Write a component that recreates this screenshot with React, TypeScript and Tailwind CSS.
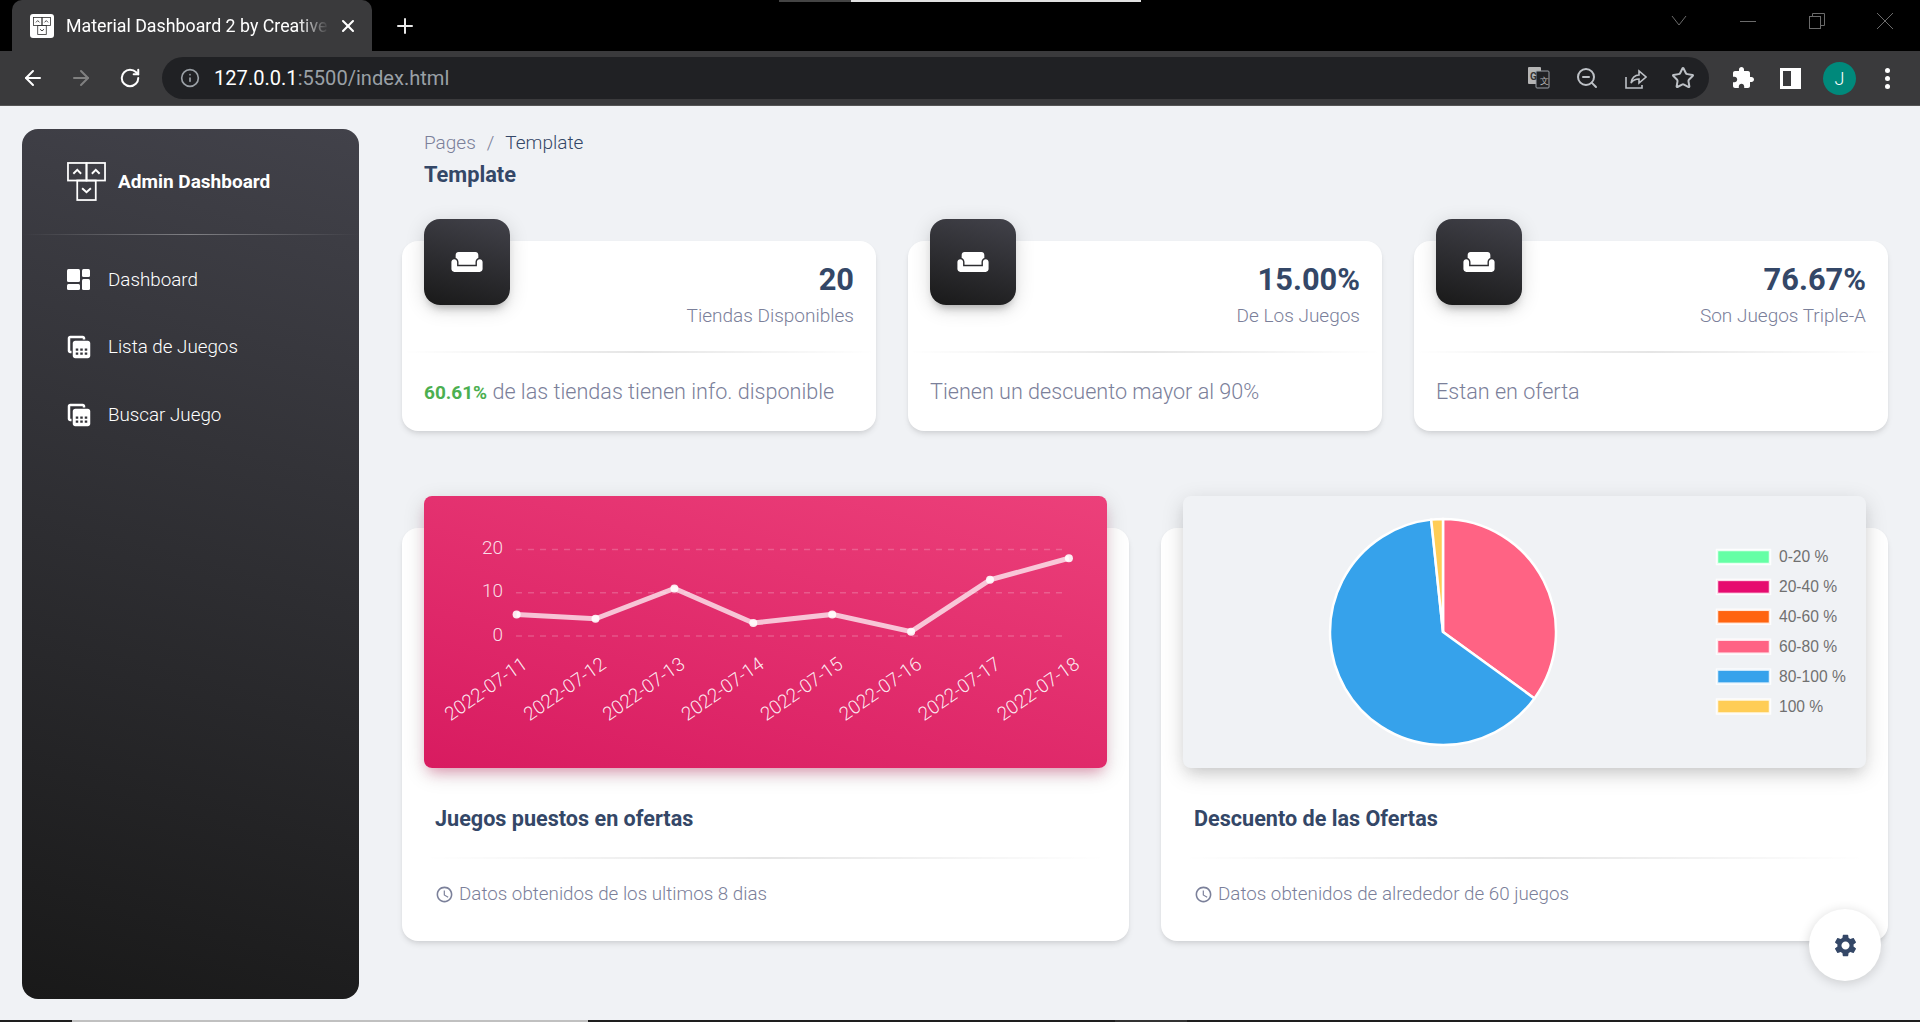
import { ArrowLeft, ArrowRight, Info, Plus, RotateCw, Star, X, ZoomOut } from 'lucide-react'

const cards = [
  { value: '20', label: 'Tiendas Disponibles', strong: '60.61%', text: ' de las tiendas tienen info. disponible' },
  { value: '15.00%', label: 'De Los Juegos', strong: '', text: 'Tienen un descuento mayor al 90%' },
  { value: '76.67%', label: 'Son Juegos Triple-A', strong: '', text: 'Estan en oferta' },
]

const linePoints = [5, 4, 11, 3, 5, 1, 13, 18]
const lineDates = ['2022-07-11', '2022-07-12', '2022-07-13', '2022-07-14', '2022-07-15', '2022-07-16', '2022-07-17', '2022-07-18']

const legend = [
  { label: '0-20 %', color: '#65ffa5' },
  { label: '20-40 %', color: '#e60b6f' },
  { label: '40-60 %', color: '#ff6410' },
  { label: '60-80 %', color: '#ff6384' },
  { label: '80-100 %', color: '#36a2eb' },
  { label: '100 %', color: '#ffcd56' },
]

const slices = [
  { from: 0, to: 126, color: '#ff6384' },
  { from: 126, to: 354, color: '#36a2eb' },
  { from: 354, to: 360, color: '#ffcd56' },
]

function LogoMark({ size, stroke }: { size: number; stroke: string }) {
  return (
    <svg width={size} height={size} viewBox="0 0 40 40" fill="none" stroke={stroke} strokeWidth="1.8">
      <rect x="1" y="1" width="19" height="18" />
      <rect x="20" y="1" width="19" height="18" />
      <rect x="10.5" y="19" width="19" height="20" />
      <path d="M6.5 12l4-4 4 4M25.5 12l4-4 4 4M15.5 27l4.5 4 4.5-4" strokeWidth="2" />
    </svg>
  )
}

function Favicon() {
  return (
    <div className="w-6 h-6 bg-white rounded-[3px] flex items-center justify-center">
      <LogoMark size={18} stroke="#333333" />
    </div>
  )
}

function DashboardIcon() {
  return (
    <svg width="23" height="21" viewBox="0 0 23 21" fill="white">
      <rect x="0" y="0" width="13" height="13" rx="1.5" />
      <rect x="0" y="15" width="13" height="6" rx="1.5" />
      <rect x="15" y="0" width="8" height="8" rx="1.5" />
      <rect x="15" y="10" width="8" height="11" rx="1.5" />
    </svg>
  )
}

function TableIcon() {
  return (
    <svg width="30" height="30" viewBox="0 0 24 24" fill="white" className="-m-[3.5px]">
      <path
        fillRule="evenodd"
        d="M19 7H9c-1.1 0-2 .9-2 2v10c0 1.1.9 2 2 2h10c1.1 0 2-.9 2-2V9c0-1.1-.9-2-2-2zM13 13.2h2V15h-2zM13 16.4h2v1.8h-2zM9.4 13.2h2V15h-2zM16.6 13.2h2V15h-2zM9.4 16.4h2v1.8h-2zM16.6 16.4h2v1.8h-2z"
      />
      <path d="M6 17H5c-1.1 0-2-.9-2-2V5c0-1.1.9-2 2-2h10c1.1 0 2 .9 2 2v1h-2V5H5v10h1v2z" />
    </svg>
  )
}

function SofaIcon() {
  return (
    <svg width="34" height="34" viewBox="0 0 24 24" fill="white">
      <path d="M21 10c-1.1 0-2 .9-2 2v3H5v-3c0-1.1-.9-2-2-2s-2 .9-2 2v5c0 1.1.9 2 2 2h18c1.1 0 2-.9 2-2v-5c0-1.1-.9-2-2-2zm-3-5H6c-1.1 0-2 .9-2 2v2.15c1.16.41 2 1.51 2 2.82V14h12v-2.03c0-1.3.84-2.4 2-2.82V7c0-1.1-.9-2-2-2z" />
    </svg>
  )
}

function ClockIcon() {
  return (
    <svg width="19" height="19" viewBox="0 0 24 24" fill="#7b809a">
      <path d="M11.99 2C6.47 2 2 6.48 2 12s4.47 10 9.99 10C17.52 22 22 17.52 22 12S17.52 2 11.99 2zM12 20c-4.42 0-8-3.58-8-8s3.58-8 8-8 8 3.58 8 8-3.58 8-8 8zm.5-13H11v6l5.25 3.15.75-1.23-4.5-2.67V7z" />
    </svg>
  )
}

function Divider() {
  return <div className="h-[2px] bg-[linear-gradient(90deg,rgba(0,0,0,0),rgba(0,0,0,0.1),rgba(0,0,0,0))]" />
}

function BrowserChrome() {
  return (
    <div className="shrink-0 font-[family-name:Roboto,sans-serif]">
      {/* Tab strip */}
      <div className="h-[51px] bg-black flex items-end relative">
        <div className="absolute top-0 left-[779px] h-[2px] w-[72px] bg-[#444444]" />
        <div className="absolute top-0 left-[851px] h-[2px] w-[290px] bg-[#e0e0e0]" />
        <div className="ml-3 w-[360px] h-[51px] bg-[#3a3a3c] rounded-t-[10px] flex items-center pl-[18px]">
          <Favicon />
          <span className="ml-[12px] mt-[2px] w-[263px] overflow-hidden whitespace-nowrap text-[17.8px] text-white [mask-image:linear-gradient(90deg,black_88%,transparent)]">
            Material Dashboard 2 by Creative
          </span>
          <X size={20} strokeWidth={2.5} color="white" className="ml-[9px]" />
        </div>
        <Plus size={24} strokeWidth={2} color="#e8e8e8" className="ml-[21px] mb-[13px]" />
        <div className="flex-1" />
        <div className="flex items-center h-[51px] pb-[9px] text-[#6b6b6b]">
          <svg width="16" height="10" viewBox="0 0 16 10" fill="none" stroke="currentColor" className="mr-[53px]">
            <path d="M1 0l7 9 7-9" />
          </svg>
          <div className="w-4 h-px bg-current mr-[53px]" />
          <svg width="16" height="16" viewBox="0 0 16 16" fill="none" stroke="currentColor" className="mr-[52px]">
            <rect x="0.5" y="3.5" width="11" height="12" />
            <path d="M3.5 3.5v-3h12v12h-4" />
          </svg>
          <svg width="16" height="16" viewBox="0 0 16 16" fill="none" stroke="currentColor" className="mr-[27px]">
            <path d="M0 0l16 16M16 0L0 16" />
          </svg>
        </div>
      </div>
      {/* Toolbar */}
      <div className="h-[55px] bg-[#3a3a3c] border-b border-[#555555] flex items-center">
        <ArrowLeft size={24} color="white" className="ml-[21px]" />
        <ArrowRight size={24} color="#808080" className="ml-[24px]" />
        <RotateCw size={22} color="white" className="ml-[26px]" strokeWidth={2.2} />
        <div className="ml-[21px] w-[1547px] h-[42px] rounded-full bg-[#202124] flex items-center pl-[18px]">
          <Info size={20} color="#9aa0a6" />
          <span className="ml-[14px] text-[20.1px] text-white">
            127.0.0.1<span className="text-[#9aa0a6]">:5500/index.html</span>
          </span>
          <div className="flex-1" />
          <svg width="22" height="24" viewBox="0 0 22 24" className="mr-[25px]">
            <rect x="0" y="1" width="13" height="17" rx="1" fill="#b5b5b5" />
            <rect x="8" y="5" width="13" height="17" rx="1" fill="#202124" stroke="#9aa0a6" />
            <text x="2" y="14" fontSize="10" fontWeight="700" fill="#333333" fontFamily="Roboto, sans-serif">G</text>
            <text x="12" y="18" fontSize="9" fill="#b5b5b5" fontFamily="Roboto, sans-serif">文</text>
          </svg>
          <ZoomOut size={24} color="#bdc1c6" className="mr-[24px]" />
          <svg width="24" height="24" viewBox="0 0 24 24" fill="none" stroke="#bdc1c6" strokeWidth="1.6" className="mr-[24px]">
            <path d="M3 11v11h16v-3M8 17c.5-5 4-8 8-8V5l7 6-7 6v-4c-3 0-6 1-8 4z" />
          </svg>
          <Star size={24} color="#bdc1c6" strokeWidth={2} className="mr-[14px]" />
        </div>
        <svg width="24" height="24" viewBox="0 0 24 24" fill="white" className="ml-[22px]">
          <path d="M20.5 11H19V7c0-1.1-.9-2-2-2h-4V3.5C13 2.12 11.88 1 10.5 1S8 2.12 8 3.5V5H4c-1.1 0-1.99.9-1.99 2v3.8H3.5c1.49 0 2.7 1.21 2.7 2.7s-1.21 2.7-2.7 2.7H2V20c0 1.1.9 2 2 2h3.8v-1.5c0-1.49 1.21-2.7 2.7-2.7 1.49 0 2.7 1.21 2.7 2.7V22H17c1.1 0 2-.9 2-2v-4h1.5c1.38 0 2.5-1.12 2.5-2.5S21.88 11 20.5 11z" />
        </svg>
        <div className="ml-[25px] w-[21px] h-[21px] border-[3px] border-white flex justify-end">
          <div className="w-[7px] h-full bg-white" />
        </div>
        <div className="ml-[22px] w-[33px] h-[33px] rounded-full bg-[#00897b] flex items-center justify-center text-white text-[18px] font-light">
          J
        </div>
        <div className="ml-[29px] flex flex-col gap-[3px]">
          <div className="w-[5px] h-[5px] rounded-full bg-white" />
          <div className="w-[5px] h-[5px] rounded-full bg-white" />
          <div className="w-[5px] h-[5px] rounded-full bg-white" />
        </div>
      </div>
    </div>
  )
}

function Sidebar() {
  const items = [
    { label: 'Dashboard', icon: <DashboardIcon /> },
    { label: 'Lista de Juegos', icon: <TableIcon /> },
    { label: 'Buscar Juego', icon: <TableIcon /> },
  ]
  return (
    <aside className="ml-[22px] mt-[23px] w-[337px] h-[870px] shrink-0 rounded-2xl bg-[linear-gradient(195deg,#42424a,#191919)] flex flex-col">
      <div className="h-[105px] pl-[45px] pt-[33px] flex items-start gap-[12px] shrink-0">
        <LogoMark size={39} stroke="white" />
        <span className="mt-[9px] text-[19px] leading-[22px] font-bold text-white">Admin Dashboard</span>
      </div>
      <div className="h-px bg-[linear-gradient(90deg,rgba(255,255,255,0),rgba(255,255,255,0.35),rgba(255,255,255,0))]" />
      <nav className="mt-[11px] pl-[45px]">
        {items.map((item) => (
          <div key={item.label} className="h-[67.5px] flex items-center">
            <div className="w-[23px] h-[23px] flex items-center justify-center shrink-0">{item.icon}</div>
            <span className="ml-[18px] text-[18.8px] font-light text-white">{item.label}</span>
          </div>
        ))}
      </nav>
    </aside>
  )
}

function StatCard({ value, label, strong, text }: (typeof cards)[number]) {
  return (
    <div className="bg-white rounded-2xl h-[190px] shadow-[0_4px_6px_-1px_rgba(0,0,0,0.1),0_2px_4px_-1px_rgba(0,0,0,0.06)] flex flex-col">
      <div className="h-[110px] px-[22px] flex justify-between items-start">
        <div className="-mt-[22px] w-[86px] h-[86px] rounded-2xl bg-[linear-gradient(195deg,#42424a,#191919)] shadow-[0_4px_20px_rgba(0,0,0,0.14),0_7px_10px_-5px_rgba(64,64,64,0.4)] flex items-center justify-center">
          <SofaIcon />
        </div>
        <div className="pt-[19px] text-right">
          <div className="text-[30.8px] leading-[40px] font-bold text-[#344767]">{value}</div>
          <div className="mt-[3px] text-[19px] leading-[25px] font-light text-[#7b809a]">{label}</div>
        </div>
      </div>
      <Divider />
      <div className="mt-[23px] px-[22px] text-[21.6px] leading-[32px] font-light text-[#7b809a]">
        {strong && <span className="font-bold text-[#4caf50] text-[19px]">{strong}</span>}
        {text}
      </div>
    </div>
  )
}

function LineChart() {
  const x = (i: number) => 92.6 + i * 78.9
  const y = (v: number) => 140 - v * 4.32
  const path = linePoints.map((v, i) => `${x(i)},${y(v)}`).join(' ')
  return (
    <svg width="683" height="272" viewBox="0 0 683 272">
      {[0, 10, 20].map((v) => (
        <g key={v}>
          <line x1="92" x2="641" y1={y(v)} y2={y(v)} stroke="white" strokeOpacity="0.2" strokeWidth="1.5" strokeDasharray="6 6" />
          <text x="79" y={y(v) + 4.5} textAnchor="end" fontSize="19" fontWeight="300" fill="white" fillOpacity="0.85">
            {v}
          </text>
        </g>
      ))}
      <polyline points={path} fill="none" stroke="white" strokeOpacity="0.72" strokeWidth="5" />
      {linePoints.map((v, i) => (
        <circle key={i} cx={x(i)} cy={y(v)} r="4" fill="white" fillOpacity="0.9" />
      ))}
      {lineDates.map((d, i) => (
        <text
          key={d}
          transform={`translate(${x(i) + 12} 171) rotate(-35)`}
          textAnchor="end"
          fontSize="19"
          fontWeight="300"
          fill="white"
          fillOpacity="0.9"
        >
          {d}
        </text>
      ))}
    </svg>
  )
}

function PieChart() {
  const cx = 260
  const cy = 136
  const r = 113
  const polar = (deg: number) => {
    const a = ((deg - 90) * Math.PI) / 180
    return `${cx + r * Math.cos(a)} ${cy + r * Math.sin(a)}`
  }
  return (
    <svg width="683" height="272" viewBox="0 0 683 272">
      {slices.map((s) => (
        <path
          key={s.color}
          d={`M${cx} ${cy}L${polar(s.from)}A${r} ${r} 0 ${s.to - s.from > 180 ? 1 : 0} 1 ${polar(s.to)}Z`}
          fill={s.color}
          stroke="white"
          strokeWidth="2.5"
        />
      ))}
      {legend.map((l, i) => (
        <g key={l.label}>
          <rect x="534" y={54 + i * 29.9} width="53" height="14" fill={l.color} stroke="white" strokeWidth="2.5" strokeOpacity="0.85" />
          <text x="596" y={66 + i * 29.9} fontSize="15.6" fill="#707070" fontFamily="'Liberation Sans', Arial, sans-serif">
            {l.label}
          </text>
        </g>
      ))}
    </svg>
  )
}

function ChartCard({ title, note, header, children }: { title: string; note: string; header: string; children: React.ReactNode }) {
  return (
    <div className="bg-white rounded-2xl h-[413px] shadow-[0_4px_6px_-1px_rgba(0,0,0,0.1),0_2px_4px_-1px_rgba(0,0,0,0.06)] flex flex-col">
      <div className={`-mt-[32px] mx-[22px] h-[272px] rounded-lg shrink-0 ${header}`}>{children}</div>
      <div className="mt-[37px] px-[33px] text-[21.6px] leading-[28px] font-bold text-[#344767]">{title}</div>
      <div className="mt-[24px] mx-[22px]">
        <Divider />
      </div>
      <div className="mt-[22px] px-[33px] flex items-center gap-[5px] text-[18.8px] leading-[26px] font-light text-[#7b809a]">
        <ClockIcon />
        {note}
      </div>
    </div>
  )
}

export default function App() {
  return (
    <div className="w-[1920px] h-[1022px] overflow-hidden flex flex-col bg-[#f0f2f5] relative font-[family-name:Roboto,sans-serif]">
      <BrowserChrome />
      <div className="flex flex-1 min-h-0">
        <Sidebar />
        <main className="ml-[43px] w-[1486px] shrink-0">
          <div className="pl-[22px] pt-[24px]">
            <div className="text-[19px] leading-[26px] font-light">
              <span className="text-[#7b809a]">Pages</span>
              <span className="mx-[11px] text-[#7b809a]">/</span>
              <span className="text-[#344767]">Template</span>
            </div>
            <h1 className="mt-[4px] text-[21.8px] leading-[30px] font-bold text-[#344767]">Template</h1>
          </div>
          <div className="mt-[51px] grid grid-cols-3 gap-[32px]">
            {cards.map((c) => (
              <StatCard key={c.value} {...c} />
            ))}
          </div>
          <div className="mt-[97px] grid grid-cols-2 gap-[32px]">
            <ChartCard
              title="Juegos puestos en ofertas"
              note="Datos obtenidos de los ultimos 8 dias"
              header="bg-[linear-gradient(195deg,#ec407a,#d81b60)] shadow-[0_6px_22px_rgba(0,0,0,0.14),0_8px_14px_-5px_rgba(233,30,99,0.4)]"
            >
              <LineChart />
            </ChartCard>
            <ChartCard
              title="Descuento de las Ofertas"
              note="Datos obtenidos de alrededor de 60 juegos"
              header="bg-[#f0f2f5] shadow-[0_6px_22px_rgba(0,0,0,0.15),0_8px_14px_-5px_rgba(64,64,64,0.15)]"
            >
              <PieChart />
            </ChartCard>
          </div>
        </main>
      </div>
      {/* Settings button */}
      <div className="absolute left-[1809px] top-[909px] w-[72px] h-[72px] rounded-full bg-white shadow-[0_2px_12px_rgba(0,0,0,0.16)] flex items-center justify-center">
        <svg width="27" height="27" viewBox="0 0 24 24" fill="#344767">
          <path d="M19.14 12.94c.04-.3.06-.61.06-.94 0-.32-.02-.64-.07-.94l2.03-1.58c.18-.14.23-.41.12-.61l-1.92-3.32c-.12-.22-.37-.29-.59-.22l-2.39.96c-.5-.38-1.03-.7-1.62-.94l-.36-2.54c-.04-.24-.24-.41-.48-.41h-3.84c-.24 0-.43.17-.47.41l-.36 2.54c-.59.24-1.13.57-1.62.94l-2.39-.96c-.22-.08-.47 0-.59.22L2.74 8.87c-.12.21-.08.47.12.61l2.03 1.58c-.05.3-.09.63-.09.94s.02.64.07.94l-2.03 1.58c-.18.14-.23.41-.12.61l1.92 3.32c.12.22.37.29.59.22l2.39-.96c.5.38 1.03.7 1.62.94l.36 2.54c.05.24.24.41.48.41h3.84c.24 0 .44-.17.47-.41l.36-2.54c.59-.24 1.13-.56 1.62-.94l2.39.96c.22.08.47 0 .59-.22l1.92-3.32c.12-.22.07-.47-.12-.61l-2.01-1.58zM12 15.6c-1.98 0-3.6-1.62-3.6-3.6s1.62-3.6 3.6-3.6 3.6 1.62 3.6 3.6-1.62 3.6-3.6 3.6z" />
        </svg>
      </div>
      {/* Taskbar edge */}
      <div className="h-[2px] shrink-0 flex bg-[#1e1e1e]">
        <div className="w-[72px]" />
        <div className="w-[516px] bg-[#c0c0c0]" />
        <div className="w-[527px]" />
        <div className="w-[72px] bg-[#333333]" />
      </div>
    </div>
  )
}
